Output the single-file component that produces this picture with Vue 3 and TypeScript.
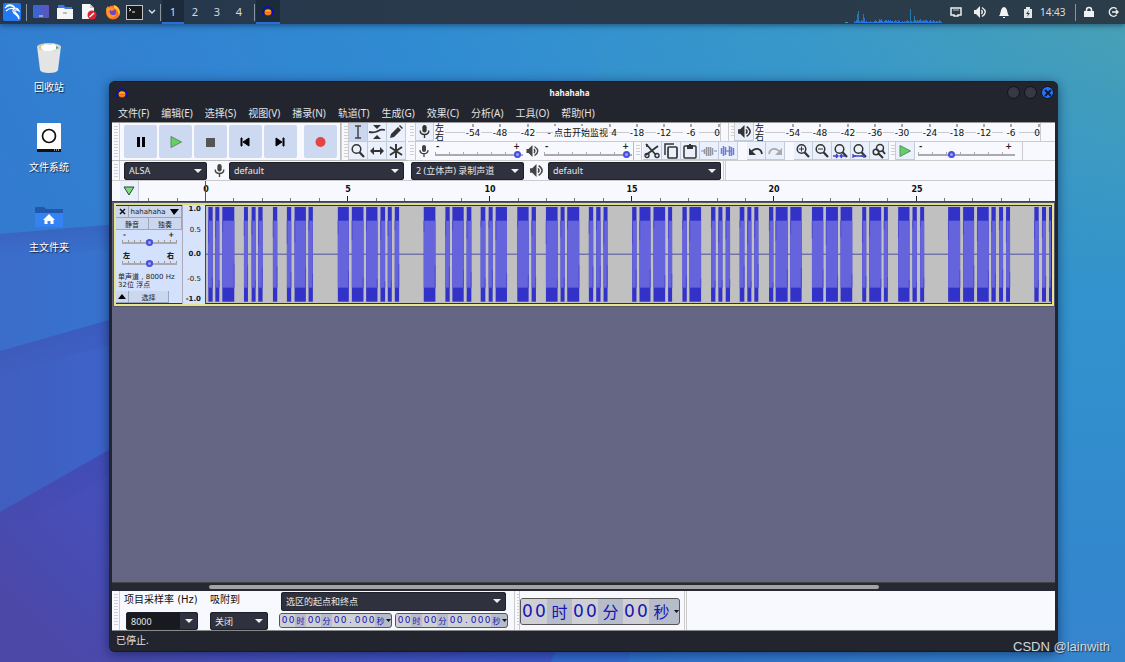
<script setup lang="ts">
import { ref } from 'vue'

const menus = ['文件(F)', '编辑(E)', '选择(S)', '视图(V)', '播录(N)', '轨道(T)', '生成(G)', '效果(C)', '分析(A)', '工具(O)', '帮助(H)']
const workspaces = [1, 2, 3, 4]

const decibels = ['-54', '-48', '-42', '-36', '-30', '-24', '-18', '-12', '-6', '0']
const meterX = (i: number) => Math.round(28 + i * 27.3)
const meters = [
  { kind: 'rec', name: '录制电平', labels: ['-54', '-48', '-42', '-', '', '4', '-18', '-12', '-6', '0'], shift: [0, 0, 0, -6, 0, 4, 0, 0, 0, -2] },
  { kind: 'play', name: '播放电平', labels: decibels, shift: [0, 0, 0, 0, 0, 0, 0, 0, 0, -2] },
]

const ruler = Array.from({ length: 32 }, (_, n) => {
  const i = n - 2
  return { i, x: Math.round(93 + i * 28.42), major: i >= 0 && i % 5 === 0 }
})

/* [start, width] of each burst, in thirds of a pixel */
const bursts: number[][] = [
  [7, 13], [28, 12], [49, 36], [114, 12], [137, 12], [157, 13], [201, 13], [243, 13], [266, 34], [308, 13],
  [396, 33], [438, 35], [481, 34], [524, 14], [546, 12], [567, 13], [654, 35], [719, 13], [740, 34], [783, 14],
  [825, 14], [849, 12], [870, 34], [935, 34], [978, 13], [1021, 35], [1065, 12], [1085, 36], [1150, 13],
  [1172, 13], [1194, 12], [1280, 13], [1302, 33], [1344, 35], [1388, 12], [1431, 13], [1452, 35], [1517, 13],
  [1539, 12], [1561, 13], [1603, 14], [1626, 12], [1647, 12], [1691, 13], [1711, 36], [1755, 34], [1820, 34],
  [1862, 36], [1906, 35], [1971, 12], [1992, 36], [2036, 12], [2079, 34], [2122, 13], [2145, 12], [2229, 36],
  [2274, 33], [2316, 35], [2359, 13], [2382, 12], [2403, 12], [2488, 13], [2511, 12], [2532, 6],
]

const cpu = [0, 2, 1, 3, 9, 12, 2, 1, 3, 2, 9, 5, 1, 2, 1, 1, 1, 2, 1, 1, 1, 2, 3, 2, 1, 2, 4, 3, 4, 2, 1, 2, 3, 3, 2, 3, 2, 3, 2, 2, 1, 2, 3, 2, 1, 3, 2, 1, 1, 2, 1, 2, 1, 2, 3, 2, 1, 14, 2, 1, 2, 7, 3, 2, 3, 2, 3, 4, 2, 2, 3, 2, 3, 3, 2, 1, 2, 3, 2, 1, 3, 2, 1, 2, 2, 1, 3, 2, 1]

const clock = [
  { t: '00', unit: false }, { t: '时', unit: true }, { t: '00', unit: false }, { t: '分', unit: true },
]
const fine = [...clock, { t: '00.000', unit: false }, { t: '秒', unit: true }]
const coarse = [...clock, { t: '00', unit: false }, { t: '秒', unit: true }]

const recVol = ref(98)
const playVol = ref(98)
const speed = ref(33)
const gain = ref(50)
const pan = ref(50)
const host = ref('ALSA')
const recDev = ref('default')
const channels = ref('2 (立体声) 录制声道')
const playDev = ref('default')
const rate = ref('8000')
const snap = ref('关闭')
const selMode = ref('选区的起点和终点')
</script>

<template>
  <div class="desktop">
    <svg class="defs" width="0" height="0" aria-hidden="true">
      <defs>
        <symbol id="mic" viewBox="0 0 14 14">
          <rect x="5" y="1" width="4" height="7" rx="2" fill="currentColor" />
          <path d="M3 6c0 5 8 5 8 0M7 10v3" fill="none" stroke="currentColor" stroke-width="1.3" />
        </symbol>
        <symbol id="speaker" viewBox="0 0 14 14">
          <path d="M1 5h2l4-4v12L3 9H1z" fill="currentColor" />
          <path d="M8.5 5q1.600 2 0 4M9 2.500q6.500 4.500 0 9" fill="none" stroke="currentColor" stroke-width="1.4" />
        </symbol>
        <symbol id="audacity" viewBox="0 0 14 12">
          <path d="M1.500 9V6a5.500 5 0 0 1 11 0v3" fill="none" stroke="#0a0ad0" stroke-width="1.300" />
          <rect x="0" y="6" width="2" height="5" rx="1" fill="#0a0ac4" />
          <rect x="12" y="6" width="2" height="5" rx="1" fill="#0a0ac4" />
          <ellipse cx="7" cy="7.500" rx="4" ry="3.700" fill="#ffb01a" />
          <path d="M3 7.500h8M4 9.700h6" stroke="#ea3a18" stroke-width="1" />
        </symbol>
        <symbol id="lens" viewBox="0 0 16 16">
          <circle cx="6.500" cy="6" r="4.300" fill="none" stroke="#333" stroke-width="1.500" />
          <path d="M9.500 9.200 14 14" stroke="#333" stroke-width="2.200" />
        </symbol>
        <symbol id="play" viewBox="0 0 14 14">
          <path d="M2 1.500 12.500 7 2 12.500z" fill="#5fd35d" stroke="#65876b" stroke-width="1" />
        </symbol>
      </defs>
    </svg>

    <svg class="wallpaper" viewBox="0 0 1125 662" preserveAspectRatio="none" aria-hidden="true">
      <defs>
        <linearGradient id="sky" x1="0" y1=".3" x2="1" y2="0">
          <stop offset="0" stop-color="#337bd0" /><stop offset=".4" stop-color="#308bd2" />
          <stop offset=".72" stop-color="#3998ca" /><stop offset="1" stop-color="#4aa2b3" />
        </linearGradient>
        <linearGradient id="right" x1="0" y1="0" x2="0" y2="1">
          <stop offset="0" stop-color="#3696c6" stop-opacity="0" /><stop offset=".45" stop-color="#3293cd" />
          <stop offset="1" stop-color="#3484ce" />
        </linearGradient>
        <linearGradient id="fold1"><stop offset="0" stop-color="#3c6dcb" /><stop offset="1" stop-color="#3278d2" /></linearGradient>
        <linearGradient id="fold2"><stop offset="0" stop-color="#405ebf" /><stop offset="1" stop-color="#3b68d2" /></linearGradient>
        <linearGradient id="fold3" x1="0" y1=".8" x2="1" y2=".3"><stop offset="0" stop-color="#4c48a8" /><stop offset=".25" stop-color="#454fba" /><stop offset="1" stop-color="#345dd2" /></linearGradient>
        <linearGradient id="crease" x1="0" y1="0" x2="0" y2="1"><stop offset="0" stop-color="#343b96" stop-opacity=".28" /><stop offset="1" stop-color="#343b96" stop-opacity="0" /></linearGradient>
        <linearGradient id="floor"><stop offset="0" stop-color="#2f74cf" /><stop offset="1" stop-color="#2f74cf" stop-opacity="0" /></linearGradient>
      </defs>
      <path d="M0 0h1125v662H0z" fill="url(#sky)" />
      <path d="M600 0h525v662H600z" fill="url(#right)" />
      <path d="M0 234 200 217V662H0z" fill="url(#fold1)" />
      <path d="M0 234 200 217V242L0 259z" fill="url(#crease)" />
      <path d="M0 351 200 294V662H0z" fill="url(#fold2)" />
      <path d="M0 351 200 294V319L0 376z" fill="url(#crease)" />
      <path d="M0 512 300 341 630 600V662H0z" fill="url(#fold3)" />
      <path d="M0 512 200 398V423L0 537z" fill="url(#crease)" />
      <path d="m560 640 75-10-7 32h-77z" fill="#326bce" />
      <path d="M636 630h414v32H628z" fill="url(#floor)" />
    </svg>

    <header class="taskbar">
      <button class="kali" aria-label="应用程序">
        <svg width="20" height="20" viewBox="0 0 20 20">
          <rect x="1" y="1" width="18" height="18" rx="2" fill="#2379ee" />
          <path d="M3 6c3-3 7-3 10 0M4 9c3-3 6-3 9-2M4 4c4-2 7-1 9 2 0 0 3 0 4 3-3-2-5-1-4 1s4 2 4 7c-1-4-3-4-5-6s-1-4 1-5" fill="none" stroke="#fff" stroke-width="1.200" />
        </svg>
      </button>
      <i class="sep"></i>
      <button class="app" aria-label="桌面"><svg width="16" height="14"><defs><linearGradient id="scr"><stop stop-color="#3269d8" /><stop offset="1" stop-color="#6153bb" /></linearGradient></defs><rect width="16" height="13" rx="1" fill="url(#scr)" /><path d="M6 11h4" stroke="#dce6ff" /></svg></button>
      <button class="app" aria-label="文件"><svg width="16" height="14"><path d="M1 0h6l1 2h7v4H1z" fill="#397ae5" /><path d="M0 3h7l1 1h8v10H0z" fill="#f5f5f5" /><path d="M6 8h4" stroke="#aaa" stroke-width="1.500" /></svg></button>
      <button class="app" aria-label="文本编辑器"><svg width="16" height="16"><path d="M1 0h8l4 4v11H1z" fill="#f6f6f6" /><path d="M9 0v4h4" fill="#ccc" /><circle cx="11" cy="11" r="4.500" fill="#dc2430" /><path d="m8.500 13 4.500-4" stroke="#fff" stroke-width="1.500" /></svg></button>
      <button class="app" aria-label="Firefox"><svg width="16" height="16"><circle cx="8" cy="8.500" r="7" fill="#ff7025" /><path d="M9 1c5 2 7 6 5 11-1-5-2-7-5-8z" fill="#ffc52f" /><circle cx="7.500" cy="8" r="3.500" fill="#7144c5" /><path d="M1 5 3 2l1 2c3-1 5 0 6 1L7 7 5 6c-2 4 3 7 6 4-1 5-8 5-9 0z" fill="#ff9828" /></svg></button>
      <button class="app term" aria-label="终端"><svg width="17" height="15"><rect x=".5" y=".5" width="16" height="14" fill="#161819" stroke="#bfc3c7" /><path d="m3 3 2 2-2 1M6 7h3" fill="none" stroke="#eee" /></svg></button>
      <button class="chev" aria-label="更多终端"><svg width="8" height="6"><path d="m1 1 3 3 3-3" fill="none" stroke="#dfe4e8" stroke-width="1.400" /></svg></button>
      <i class="sep"></i>
      <nav class="spaces">
        <button v-for="w in workspaces" :key="w" :class="{ on: w === 1 }">{{ w }}</button>
      </nav>
      <i class="sep"></i>
      <button class="running" aria-label="hahahaha"><svg width="12" height="10"><use href="#audacity" /></svg></button>

      <div class="tray">
        <svg class="cpu" width="98" height="22" aria-hidden="true">
          <rect x="0" y="21" width="3" height="1" fill="#21a58c" />
          <rect v-for="(v, i) in cpu" :key="i" :x="8 + i" :y="22 - v" width="1" :height="v" :fill="v > 6 ? '#2479ad' : '#2474e8'" />
        </svg>
        <button aria-label="网络"><svg width="12" height="12"><path d="M1 2h10v7H8v1H4V9H1z" fill="none" stroke="#eee" stroke-width="1.500" /><path d="M4 3v2M6 3v2M8 3v2" stroke="#bbb" /></svg></button>
        <button aria-label="音量"><svg width="14" height="14"><use href="#speaker" /></svg></button>
        <button aria-label="通知"><svg width="12" height="12"><path d="M1 10c2-2 1-8 5-9 4 1 3 7 5 9zM5 11h2v1H5z" fill="#f2f2f2" /></svg></button>
        <button aria-label="电池"><svg width="12" height="12"><path d="M2 3h2V1h4v2h2v9H2z" fill="#e3e7e8" /><path d="M7 4 4 8h2l-1 3 3-4H6z" fill="#293a48" /></svg></button>
        <time>14:43</time>
        <i class="sep"></i>
        <button aria-label="锁定"><svg width="12" height="12"><rect x="1" y="5" width="10" height="6" fill="#f2f2f2" /><path d="M3.500 5V4a2.500 2.500 0 0 1 5 0v1" fill="none" stroke="#f2f2f2" stroke-width="1.500" /></svg></button>
        <button aria-label="注销"><svg width="12" height="12"><path d="M9.500 3a4.200 4.200 0 1 0 0 6" fill="none" stroke="#eee" stroke-width="1.500" /><path d="M5 6h6M9 4l2 2-2 2" fill="none" stroke="#eee" stroke-width="1.400" /></svg></button>
      </div>
    </header>

    <main class="icons">
      <a href="#" class="shortcut">
        <svg width="28" height="32" viewBox="0 0 28 32"><path d="M2 4h24l-3 24q-1 3-9 3t-9-3z" fill="#e4e4e4" /><ellipse cx="14" cy="5" rx="12" ry="4" fill="#d2d2ce" /><path d="m5 5 6-3 4 1 4-1 5 4-8 3H9z" fill="#fff" /><path d="m4 5 2-2v4z" fill="#e9c75a" /><path d="m21 4 3 2-3 1z" fill="#43a985" /></svg>
        <span>回收站</span>
      </a>
      <a href="#" class="shortcut">
        <svg width="28" height="32" viewBox="0 0 28 32"><rect x="2" y="1" width="24" height="29" rx="1" fill="#fff" /><circle cx="14" cy="14" r="6.500" fill="none" stroke="#111" stroke-width="1.700" /><path d="M2 27h24v3H2z" fill="#111" /><path d="M19 28h1m1 0h1m1 0h1" stroke="#fff" /></svg>
        <span>文件系统</span>
      </a>
      <a href="#" class="shortcut">
        <svg width="28" height="32" viewBox="0 0 28 32"><path d="M0 6q0-1 1-1h8l2 2h17v8H0z" fill="#2058ae" /><path d="M0 11h28v14H0z" fill="#3583f3" /><path d="m14 12 6 6h-1.500v4h-3v-3h-3v3h-3v-4H8z" fill="#fff" /></svg>
        <span>主文件夹</span>
      </a>
    </main>

    <section class="window">
      <div class="titlebar">
        <svg width="12" height="10"><use href="#audacity" /></svg>
        <h1>hahahaha</h1>
        <div class="wbtns">
          <button aria-label="最小化"></button>
          <button aria-label="最大化"></button>
          <button class="close" aria-label="关闭"><svg width="8" height="8"><path d="m1 1 6 6M7 1 1 7" stroke="#0d1a30" stroke-width="1.800" /></svg></button>
        </div>
      </div>

      <nav class="menu"><button v-for="m in menus" :key="m">{{ m }}</button></nav>

      <div class="top">
        <div class="transport">
          <i class="grip"></i>
          <button aria-label="暂停"><svg width="14" height="14"><path d="M3 2h3v10H3zM8 2h3v10H8z" /></svg></button>
          <button aria-label="播放"><svg width="14" height="14"><use href="#play" /></svg></button>
          <button aria-label="停止"><svg width="14" height="14"><path d="M2 3h9v9H2z" fill="#555" /></svg></button>
          <button aria-label="跳至开头"><svg width="14" height="14"><path d="M2 3h1v8H2zM10 3v8L4 7z" stroke="#000" /></svg></button>
          <button aria-label="跳至结尾"><svg width="14" height="14"><path d="M9 3h1v8H9zM2 3v8l6-4z" stroke="#000" /></svg></button>
          <button class="rec" aria-label="录制"><svg width="14" height="14"><circle cx="6.500" cy="7" r="5" fill="#e64345" /></svg></button>
        </div>

        <div class="tools">
          <i class="grip"></i>
          <div class="toolgrid">
            <button class="on" aria-label="选择工具"><svg width="16" height="16"><path d="M5 2h6M5 14h6M8 2v12" stroke="#444" stroke-width="1.500" /></svg></button>
            <button aria-label="包络工具"><svg width="18" height="16"><path d="M5 1h8L9 5zM5 15h8L9 11z" fill="#333" /><path d="M1 8q6 1 9-1t7-1" fill="none" stroke="#333" stroke-width="1.800" /></svg></button>
            <button aria-label="绘制工具"><svg width="16" height="16"><path d="m2 14 1-4 7-7 3 3-7 7zM11 2l1-1 3 3-1 1z" fill="#333" /></svg></button>
            <button aria-label="缩放工具"><svg width="16" height="16"><use href="#lens" /></svg></button>
            <button aria-label="时移工具"><svg width="16" height="16"><path d="M1 8l4-4v3h6V4l4 4-4 4V9H5v3z" fill="#333" /></svg></button>
            <button aria-label="多功能工具"><svg width="16" height="16"><path d="M8 1v14M2 4l12 8M14 4 2 12" stroke="#333" stroke-width="1.900" /></svg></button>
          </div>
        </div>

        <div class="right">
          <div class="row">
            <div v-for="m in meters" :key="m.kind" class="meter" :class="m.kind">
              <i class="grip"></i>
              <button class="tb" :aria-label="m.name"><svg width="15" height="15"><use :href="m.kind === 'rec' ? '#mic' : '#speaker'" /></svg></button>
              <div class="lr"><span>左</span><span>右</span></div>
              <div class="scale">
                <svg width="276" height="19">
                  <path d="M0 9.500h276" stroke="#c9c9cf" />
                  <g v-for="(d, i) in m.labels" :key="i">
                    <path :d="`M${meterX(i)} 1v3`" stroke="#555" />
                    <rect v-if="d.length > 1" :x="meterX(i) - 8" y="5" width="16" height="10" fill="#f8f9fe" />
                    <text v-if="d" :x="meterX(i) + m.shift[i]" y="13" text-anchor="middle">{{ d }}</text>
                  </g>
                </svg>
                <span v-if="m.kind === 'rec'" class="hint">点击开始监视</span>
              </div>
            </div>
          </div>
          <div class="row">
            <div class="mixer">
              <i class="grip"></i>
              <svg class="ic" width="14" height="14"><use href="#mic" /></svg>
              <label class="slider"><span><b>-</b><b>+</b></span><input v-model="recVol" type="range" aria-label="录制音量"></label>
              <svg class="ic" width="15" height="14"><use href="#speaker" /></svg>
              <label class="slider"><span><b>-</b><b>+</b></span><input v-model="playVol" type="range" aria-label="播放音量"></label>
            </div>
            <div class="edit">
              <i class="grip"></i>
              <button class="tb" aria-label="剪切"><svg width="16" height="16"><path d="M2 1 12 12M2 12 14 3M3 1v3" fill="none" stroke="#333" stroke-width="1.800" /><circle cx="3" cy="12.500" r="2" fill="none" stroke="#333" stroke-width="1.400" /><circle cx="13" cy="12.500" r="2" fill="none" stroke="#333" stroke-width="1.400" /></svg></button>
              <button class="tb" aria-label="复制"><svg width="16" height="16"><path d="M2 12V1h9" fill="none" stroke="#333" stroke-width="1.500" /><rect x="5" y="4" width="9" height="11" rx="1" fill="none" stroke="#333" stroke-width="1.700" /></svg></button>
              <button class="tb" aria-label="粘贴"><svg width="16" height="16"><rect x="2" y="3" width="12" height="12" rx="1" fill="none" stroke="#333" stroke-width="1.500" /><path d="M5 2h2V1h2v1h2v4H5z" fill="#333" /></svg></button>
              <button class="tb" aria-label="修剪"><svg width="16" height="14"><path d="M0 7h3M13 7h3" stroke="#7b86e7" /><path d="M3.500 5v5M5.500 3v9M7.500 3v9M9.500 3v9M11.500 4v7" stroke="#96979d" stroke-width="1.500" /></svg></button>
              <button class="tb" aria-label="静音"><svg width="16" height="14"><path d="M5 7h6" stroke="#666" /><path d="M1.500 4v6M3.500 2v10M5.500 3v8M9.500 2v10M11.500 3v9M13.500 4v7" stroke="#6f7bdc" stroke-width="1.500" /></svg></button>
              <button class="tb gap" aria-label="撤销"><svg width="16" height="14"><path d="M14 10C13 4 7 3 3 8" fill="none" stroke="#333" stroke-width="1.800" /><path d="M1 4v7h7z" fill="#333" /></svg></button>
              <button class="tb" aria-label="重做"><svg width="16" height="14"><path d="M2 10C3 4 9 3 13 8" fill="none" stroke="#aaa" stroke-width="1.800" /><path d="M15 4v7H8z" fill="#aaa" /></svg></button>
              <button class="tb gap" aria-label="放大"><svg width="16" height="16"><use href="#lens" /><path d="M4 6h5M6.500 3.500v5" stroke="#333" /></svg></button>
              <button class="tb" aria-label="缩小"><svg width="16" height="16"><use href="#lens" /><path d="M4 6h5" stroke="#333" /></svg></button>
              <button class="tb" aria-label="缩放到选区"><svg width="16" height="16"><use href="#lens" /><path d="M0 13h5M7 13h5M3 11l2 2-2 2M9 11l-2 2 2 2" fill="none" stroke="#3a41d0" stroke-width="1.300" /></svg></button>
              <button class="tb" aria-label="适应项目"><svg width="16" height="16"><use href="#lens" /><path d="M1 11v4M12 11v4M1 13h11M3 12v2M10 12v2" stroke="#3a41d0" stroke-width="1.300" /></svg></button>
              <button class="tb" aria-label="切换缩放"><svg width="16" height="16"><circle cx="9" cy="5" r="3.500" fill="none" stroke="#333" stroke-width="1.500" /><circle cx="5" cy="9" r="2.800" fill="none" stroke="#333" stroke-width="1.500" /><path d="m11 7 3 4M7 10l5 5" stroke="#333" stroke-width="2" /></svg></button>
            </div>
            <div class="speed">
              <i class="grip"></i>
              <button class="tb" aria-label="以指定速度播放"><svg width="14" height="14"><use href="#play" /></svg></button>
              <label class="slider wide"><span><b>-</b><b>+</b></span><input v-model="speed" type="range" aria-label="播放速度"></label>
            </div>
          </div>
        </div>
      </div>

      <div class="devices">
        <i class="grip"></i>
        <div class="sel host"><select v-model="host" aria-label="音频主机"><option>ALSA</option></select></div>
        <svg class="ic" width="15" height="15"><use href="#mic" /></svg>
        <div class="sel dev"><select v-model="recDev" aria-label="录制设备"><option>default</option></select></div>
        <div class="sel chan"><select v-model="channels" aria-label="录制声道"><option>2 (立体声) 录制声道</option></select></div>
        <svg class="ic" width="15" height="15"><use href="#speaker" /></svg>
        <div class="sel dev"><select v-model="playDev" aria-label="播放设备"><option>default</option></select></div>
        <i class="end"></i>
      </div>

      <div class="ruler">
        <button aria-label="固定播放头"><svg width="12" height="12"><path d="M1 2h10l-5 8z" fill="#7fdc7d" stroke="#2f4b35" /></svg></button>
        <svg width="100%" height="20">
          <g v-for="r in ruler" :key="r.i">
            <path :d="`M${r.x + 0.5} ${r.major ? 15 : 17}V20`" :stroke="r.major ? '#222' : '#777'" />
            <text v-if="r.major" :x="r.x + 1" y="11" text-anchor="middle">{{ r.i }}</text>
          </g>
          <path d="M93.500 0v20" stroke="#555" />
        </svg>
      </div>

      <div class="tracks">
        <article class="track">
          <aside class="panel">
            <div class="prow"><button class="x" aria-label="关闭轨道"><svg width="7" height="7"><path d="m1 1 5 5M6 1 1 6" stroke="#111" stroke-width="1.500" /></svg></button><button class="name">hahahaha<svg width="9" height="6"><path d="M0 0h9L4 6z" /></svg></button></div>
            <div class="prow two"><button>静音</button><button>独奏</button></div>
            <label class="slider small"><span><b>-</b><b>+</b></span><input v-model="gain" type="range" aria-label="增益"></label>
            <label class="slider small pan"><span><b>左</b><b>右</b></span><input v-model="pan" type="range" aria-label="声像"></label>
            <p>单声道 , 8000 Hz<br>32位 浮点</p>
            <div class="prow foot"><button class="x" aria-label="折叠"><svg width="8" height="5"><path d="M0 5h8L4 0z" /></svg></button><button class="pick">选择</button></div>
          </aside>
          <div class="vscale"><b>1.0</b><span class="up">0.5</span><b>0.0</b><span class="down">-0.5</span><b>-1.0</b></div>
          <svg class="wave" viewBox="0 0 2538 297" preserveAspectRatio="none">
            <path d="M0 147.500h2538" stroke="#4c4f9b" stroke-width="3" />
            <g v-for="b in bursts" :key="b[0]">
              <rect :x="b[0]" y="3" :width="b[1]" height="290" fill="#3231c8" />
              <rect :x="b[0]" y="45" :width="b[1]" height="205" fill="#6564dc" />
              <path :d="`M${b[0] + 1} 45v${20 + (b[0] * 7) % 55}M${b[0] + b[1] - 1} 250v-${15 + (b[0] * 11) % 60}`" stroke="#4542cb" stroke-width="2" />
            </g>
          </svg>
        </article>
      </div>

      <div class="scroll"><i></i></div>

      <div class="bottom">
        <i class="grip"></i>
        <div class="field">
          <label for="rate">项目采样率 (Hz)</label>
          <div class="sel rate"><select id="rate" v-model="rate"><option>8000</option></select></div>
        </div>
        <div class="field snap">
          <label for="snap">吸附到</label>
          <div class="sel"><select id="snap" v-model="snap"><option>关闭</option></select></div>
        </div>
        <div class="range">
          <div class="sel mode"><select v-model="selMode" aria-label="选区模式"><option>选区的起点和终点</option></select></div>
          <div class="times">
            <div v-for="n in 2" :key="n" class="tc" tabindex="0">
              <span v-for="(g, i) in fine" :key="i" :class="g.unit ? 'unit' : 'num'"><template v-if="g.unit">{{ g.t }}</template><template v-else><i v-for="(c, j) in g.t" :key="j">{{ c }}</i></template></span>
              <svg width="5" height="4"><path d="M0 0h5L2.500 3z" /></svg>
            </div>
          </div>
        </div>
        <i class="grip second"></i>
        <div class="tc big" tabindex="0">
          <span v-for="(g, i) in coarse" :key="i" :class="g.unit ? 'unit' : 'num'"><template v-if="g.unit">{{ g.t }}</template><template v-else><i v-for="(c, j) in g.t" :key="j">{{ c }}</i></template></span>
          <svg width="5" height="4"><path d="M0 0h5L2.500 3z" /></svg>
        </div>
        <i class="end"></i>
      </div>

      <footer class="status">已停止.</footer>
    </section>

    <div class="mark">CSDN @lainwith</div>
  </div>
</template>

<style>
body { margin: 0; background: #3080cc; }
</style>

<style scoped>
.desktop { position: relative; min-height: 100vh; overflow: hidden; font-family: "Noto Sans", "Noto Sans CJK SC", sans-serif; font-size: 10px; color: #eee; }
.desktop *, .desktop { box-sizing: border-box; }
.defs { position: absolute; }
.wallpaper { position: absolute; inset: 0; width: 100%; height: 100%; }
button { padding: 0; border: 0; background: none; color: inherit; font: inherit; display: flex; align-items: center; justify-content: center; }
svg { display: block; flex: none; }

.taskbar { position: relative; display: flex; align-items: center; height: 24px; background: linear-gradient(90deg, #26374d, #2b3d49); box-shadow: 0 1px 6px rgba(10, 30, 60, .6); padding-left: 2px; }
.sep { width: 1px; height: 17px; background: #8a949e; margin: 0 1px 0 4px; }
.taskbar .kali { width: 20px; }
.app { width: 16px; margin-left: 8px; }
.sep + .app { margin-left: 5px; }
.term { margin-left: 5px; width: 17px; }
.chev { width: 17px; margin-right: -4px; }
.spaces { display: flex; height: 24px; }
.spaces button { width: 22px; font-size: 11px; color: #d3dae1; border-bottom: 2px solid transparent; }
.spaces .on, .running { background: #1b2b3c; border-bottom: 2px solid #2b6ddb; }
.running { width: 24px; height: 24px; }
.tray { display: flex; align-items: center; margin-left: auto; }
.tray button { width: 24px; }
.cpu { margin-right: 1px; align-self: flex-end; }
.tray time { width: 26px; color: #d8dee2; }
.tray .sep { margin: 0 1px 0 9px; }

.icons { position: relative; width: 98px; padding-top: 18px; display: flex; flex-direction: column; }
.shortcut { height: 80px; display: flex; flex-direction: column; align-items: center; gap: 6px; color: #fff; text-decoration: none; line-height: 14px; text-shadow: 1px 1px 1px #123; }

.window { position: absolute; inset: 81px 67px 10px 109px; display: flex; flex-direction: column; padding: 0 3px; background: #22252e; border-radius: 6px; border: 1px solid #171a21; border-width: 1px 0; box-shadow: 0 2px 12px rgba(0, 15, 50, .55); }
.titlebar { display: flex; align-items: center; height: 21px; padding: 0 1px 0 4px; }
.titlebar h1 { flex: 1; margin: 0 0 0 4px; font-size: 8px; line-height: 12px; text-align: center; color: #f4f4f4; }
.wbtns { display: flex; gap: 4px; }
.wbtns button { width: 13px; height: 13px; border-radius: 50%; background: #363945; border: 1px solid #101219; }
.wbtns .close { background: #2872f0; }
.menu { display: flex; height: 19px; padding-left: 6px; gap: 12px; color: #e1e3e6; }

.top { display: flex; height: 39px; background: #f8f9fe; color: #333; border-top: 1px solid #999; }
.grip { flex: none; width: 8px; border-right: 1px solid #ccc; align-self: stretch; background: repeating-linear-gradient(#cfcfd4 0 1px, transparent 1px 3px) 2px 3px / 4px calc(100% - 6px) no-repeat; }
.transport { display: flex; width: 229px; gap: 2px; align-items: center; border-right: 1px solid #bbb; border-bottom: 1px solid #bbb; }
.transport .grip { margin-right: 2px; }
.transport button { width: 33px; height: 33px; border-radius: 2px; background: #cdd9f1; }
.transport .rec { margin-left: 5px; }
.tools { display: flex; width: 67px; border-left: 1px solid #ccc; border-bottom: 1px solid #bbb; }
.tools .grip { width: 7px; }
.toolgrid { display: grid; grid-template-columns: repeat(3, 19px); grid-template-rows: 19px 18px; }
.toolgrid button, .tb { background: #eaf0fc; border-right: 1px solid #c3cad8; border-bottom: 1px solid #c3cad8; }
.toolgrid .on { background: #c9d6ee; }
.right { flex: 1; display: flex; flex-direction: column; min-width: 0; }
.row { display: flex; height: 19px; border-bottom: 1px solid #ccc; }
.row:last-child { height: 20px; }
.meter { display: flex; }
.meter.rec { width: 321px; border-right: 1px solid #ccc; }
.meter.play .grip { width: 6px; }
.tb { width: 19px; flex: none; }
.meter.rec .tb { width: 18px; }
.lr { width: 11px; display: flex; flex-direction: column; font-size: 9px; line-height: 9px; padding-left: 1px; color: #111; }
.scale { position: relative; width: 276px; border-right: 1px solid #ccc; }
.scale text { font: 9px "DejaVu Sans", sans-serif; fill: #111; }
.hint { position: absolute; left: 108px; top: 3px; padding: 0 1px; background: #f8f9fe; color: #111; font-size: 9px; line-height: 13px; white-space: nowrap; }
.ic { align-self: center; color: #444; }
.mixer { display: flex; width: 226px; border-right: 1px solid #bbb; align-items: center; }
.mixer .ic { margin-left: 1px; }
.slider { display: flex; flex-direction: column; width: 88px; margin: 0 1px 0 4px; }
.slider span { display: flex; justify-content: space-between; padding: 0 3px 0 1px; height: 6px; font: bold 8px/6px "DejaVu Sans", "Noto Sans CJK SC", sans-serif; color: #222; }
.slider input { appearance: none; width: 100%; height: 9px; margin: 0; background: repeating-linear-gradient(90deg, #aaa 0 1px, transparent 1px 14px) 0 2px / 100% 2px no-repeat, linear-gradient(#aaa, #aaa) 0 4px / 100% 2px no-repeat; }
.slider input::-webkit-slider-thumb { appearance: none; width: 7px; height: 7px; border-radius: 50%; border: 2px solid #464edf; background: #9da3ee; }
.edit { display: flex; width: 255px; }
.edit .grip { margin-right: 1px; }
.edit .gap { margin-left: 9px; }
.speed { display: flex; width: 134px; border-right: 1px solid #ccc; align-items: center; }
.speed .tb { align-self: stretch; }
.speed .grip { width: 7px; }
.slider.wide { width: 97px; margin-left: 3px; }

.sel { position: relative; height: 18px; border-radius: 3px; background: #2f323e; box-shadow: 0 0 0 1px #1d2028 inset; }
.sel::after { content: ""; position: absolute; right: 5px; top: 7px; border: 4px solid transparent; border-top-color: #eee; pointer-events: none; }
.sel select { appearance: none; width: 100%; height: 100%; padding: 0 14px 0 5px; border: 0; background: none; color: #e8e8e8; font: inherit; font-size: 9px; }
.devices { display: flex; align-items: center; height: 20px; background: #f8f9fe; border-bottom: 1px solid #ccc; }
.host { width: 83px; margin: 0 5px 0 4px; }
.dev { width: 175px; margin-left: 2px; }
.chan { width: 113px; margin: 0 5px 0 7px; }
.devices .dev:nth-last-child(2) { width: 173px; margin-left: 4px; }
.end { align-self: stretch; width: 3px; margin-left: 2px; border: 1px solid #ccc; border-width: 0 1px; }

.ruler { position: relative; display: flex; height: 20px; background: #f8f9fe; }
.ruler > svg { margin-left: -27px; flex: 1; min-width: 0; }
.ruler button { width: 19px; margin-left: 8px; background: #eaf0fc; border-right: 1px solid #c3cad8; }
.ruler text { font: bold 8px "DejaVu Sans", sans-serif; fill: #111; }

.tracks { flex: 1; background: #646683; border-top: 1px solid #3e4050; padding-left: 1px; }
.track { display: flex; height: 105px; border: 3px solid #e7e58a; border-top-color: #dfdd84; outline: 1px solid #55566a; outline-offset: -1px; background: #c0c0c0; }
.panel { width: 66px; flex: none; background: #d4e1fd; border: solid #333; border-width: 1px 0; color: #1c1c24; font: 7px "DejaVu Sans", "Noto Sans CJK SC", sans-serif; display: flex; flex-direction: column; }
.prow { display: flex; height: 12px; }
.prow button { border: solid #9aa6bd; border-width: 0 1px 1px 0; background: #cbd7ef; }
.x { width: 13px; flex: none; }
.name { flex: 1; gap: 5px; }
.two button { flex: 1; }
.slider.small { width: 55px; margin: 2px 0 0 6px; }
.small span { font-size: 7px; }
.small.pan { margin-top: 6px; }
.small input { background: repeating-linear-gradient(90deg, #999 0 1px, transparent 1px 6px) 0 2px / 100% 2px no-repeat, linear-gradient(#aaa, #aaa) 0 4px / 100% 2px no-repeat; }
.panel p { margin: 5px 0 0 2px; line-height: 8px; white-space: nowrap; }
.foot { margin-top: auto; }
.foot .pick { width: 40px; }
.vscale { width: 24px; flex: none; background: linear-gradient(#d7e3fb, #d7e3fb) 0 0 / 22px 100% no-repeat; border-left: 1px solid #aab; border-right: 1px solid #444; padding-right: 4px; display: flex; flex-direction: column; justify-content: space-between; text-align: right; font: 7px/9px "DejaVu Sans", sans-serif; color: #181818; }
.vscale .up { margin-bottom: 4px; }
.vscale .down { margin-top: 4px; }
.wave { flex: 1; min-width: 0; height: 99px; border: solid #333; border-width: 1px 1px 1px 0; }

.scroll { height: 9px; background: #262934; border-top: 1px solid #444; padding: 2px 8px 0 97px; }
.scroll i { display: block; width: 80%; height: 4px; border-radius: 2px; background: #a3a3a3; }

.bottom { display: flex; height: 40px; background: #f8f9fe; color: #222; border-bottom: 1px solid #888; }
.field { width: 82px; margin-left: 4px; display: flex; flex-direction: column; justify-content: space-between; }
.field label { font: 10px/18px "DejaVu Sans", "Noto Sans CJK SC", sans-serif; white-space: nowrap; color: #111; }
.rate { width: 72px; margin-left: 2px; background: linear-gradient(90deg, #181a20 54px, #30333f 54px); }
.snap { width: 69px; }
.snap .sel { width: 58px; }
.range { display: flex; flex-direction: column; gap: 2px; width: 235px; flex: none; }
.mode { width: 225px; height: 19px; margin: 1px 0 0 2px; }
.times { display: flex; gap: 3px; }
.tc { display: flex; align-items: center; height: 15px; border: 1px solid #555; border-radius: 3px; background: #b6bcc9; color: #1515b5; font: 9px/13px "DejaVu Sans", "Noto Sans CJK SC", sans-serif; overflow: hidden; }
.tc .num { display: flex; align-self: stretch; padding-left: 1px; background: #cfd0d3; }
.tc .num i { width: 7px; text-align: center; font-style: normal; }
.tc .unit { width: 11px; font-size: 8px; padding-top: 2px; text-align: center; }
.tc svg { fill: #111; }
.second { width: 6px; border-left: 1px solid #ccc; }
.big { width: 160px; height: 27px; margin-top: 7px; font-size: 17px; line-height: 25px; justify-content: space-between; }
.big .num { padding: 0; }
.big .num i { width: 13px; }
.big .unit { width: 24px; font-size: 16px; padding-top: 2px; }
.bottom .end { margin-left: 4px; }
.status { height: 20px; line-height: 19px; padding-left: 4px; color: #e1e3e6; }
.mark { position: absolute; right: 15px; bottom: 7px; font: 13px/16px "Liberation Sans", sans-serif; color: #d3d7dc; text-shadow: 1px 1px 1px #234; }
</style>
